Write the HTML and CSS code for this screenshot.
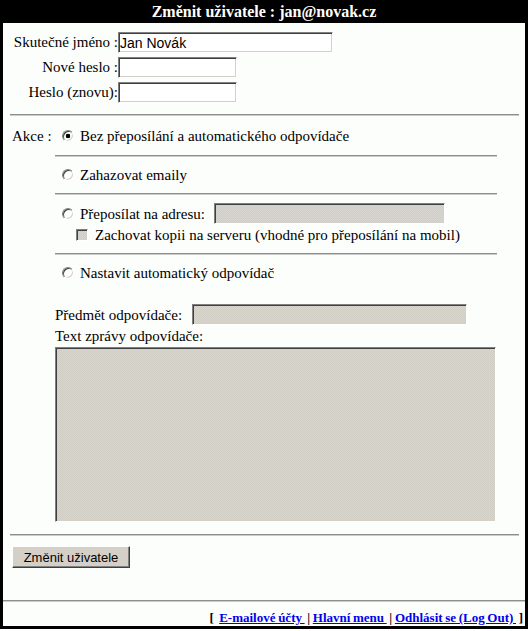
FILE: index.html
```html
<!DOCTYPE html>
<html lang="cs">
<head>
<meta charset="utf-8">
<title>Změnit uživatele</title>
<link rel="stylesheet" href="styles.css">
</head>
<body>
<div class="frame">
  <h1 class="title">Změnit uživatele : jan@novak.cz</h1>
  <form class="form">
    <div class="user">
      <label class="lbl">Skutečné jméno :</label><input class="tf name" type="text" value="Jan Novák">
      <label class="lbl">Nové heslo :</label><input class="tf pw" type="password">
      <label class="lbl">Heslo (znovu):</label><input class="tf pw" type="password">
    </div>
    <hr class="rule wide">
    <div class="actions">
      <div class="akce">Akce :</div>
      <div class="opts">
        <label class="opt r1"><input class="rb" type="radio" name="akce" checked>Bez přeposílání a automatického odpovídače</label>
        <hr class="rule sub h1">
        <label class="opt r2"><input class="rb" type="radio" name="akce">Zahazovat emaily</label>
        <hr class="rule sub h2">
        <div class="opt r3"><input class="rb" type="radio" name="akce">Přeposílat na adresu:<input class="tf off fwd" type="text" disabled></div>
        <label class="opt r3b"><input class="cb" type="checkbox" disabled>Zachovat kopii na serveru (vhodné pro přeposílání na mobil)</label>
        <hr class="rule sub h3">
        <label class="opt r4"><input class="rb" type="radio" name="akce">Nastavit automatický odpovídač</label>
        <div class="opt subj">Předmět odpovídače:<input class="tf off subjin" type="text" disabled></div>
        <div class="opt txtl">Text zprávy odpovídače:</div>
        <textarea class="ta off" disabled></textarea>
      </div>
    </div>
    <hr class="rule wide lower">
    <div class="submit"><button class="btn" type="button">Změnit uživatele</button></div>
    <hr class="rule full">
    <div class="footer">[&nbsp; <a href="#">E-mailové účty&nbsp;</a> | <a href="#">Hlavní menu&nbsp;</a> | <a href="#">Odhlásit se (Log Out)&nbsp;</a> ]</div>
  </form>
</div>
</body>
</html>
```

FILE: styles.css
```css
html, body {
  margin: 0;
  padding: 0;
  background: #ffffff;
}
body {
  font-family: "Liberation Serif", "Times New Roman", serif;
  font-size: 15px;
  color: #000;
}
.frame {
  width: 528px;
  box-sizing: border-box;
  border: 3px solid #000;
  border-top: 0;
  background: #fcfefc;
}
.title {
  margin: 0;
  height: 23px;
  line-height: 23px;
  background: #000;
  color: #fff;
  font-size: 16px;
  font-weight: bold;
  text-align: center;
}
.form {
  margin: 0;
}
.user {
  padding-top: 9px;
  display: grid;
  grid-template-columns: 115px auto;
  row-gap: 4px;
  align-items: center;
}
.lbl {
  text-align: right;
  line-height: 21px;
  white-space: nowrap;
}
.tf {
  box-sizing: border-box;
  height: 21px;
  margin: 0;
  padding: 0 0 0 1px;
  font-family: "Liberation Sans", Arial, sans-serif;
  font-size: 14px;
  color: #000;
  background: #fff;
  border: 1px solid;
  border-color: #808080 #ffffff #ffffff #808080;
  box-shadow: inset 1px 1px 0 #404040, inset -1px -1px 0 #d4d0c8;
  outline: none;
  justify-self: start;
}
.name { width: 215px; }
.pw { width: 119px; }
.off, .cb {
  background-color: #d4d0c8;
  background-image: repeating-conic-gradient(#d9d7d1 0 25%, #cfccc4 0 50%);
  background-size: 2px 2px;
}
.rule {
  height: 0;
  border: 0;
  border-top: 1px solid #8e8e8e;
  border-bottom: 1px solid #cbcbcb;
  padding: 0;
}
.rule.wide {
  margin: 11px 6px 0 7px;
}
.rule.wide.lower {
  margin-top: 12px;
}
.rule.full {
  margin: 32px 0 0 0;
}
.rule.sub {
  margin: 9px 0 0 0;
}
.rule.h2, .rule.h3 { margin-top: 8px; }
.actions {
  display: flex;
}
.akce {
  width: 52px;
  box-sizing: border-box;
  padding-left: 9px;
  margin-top: 10px;
  line-height: 20px;
  white-space: nowrap;
}
.opts {
  width: 442px;
  display: flex;
  flex-direction: column;
}
.opt {
  display: flex;
  align-items: center;
  height: 20px;
  line-height: 20px;
  white-space: nowrap;
}
.r1 { margin-top: 10px; }
.r2 { margin-top: 8px; }
.r3 { margin-top: 8px; height: 21px; }
.r3b { margin-top: 1px; }
.r4 { margin-top: 8px; }
.subj { margin-top: 21px; height: 21px; }
.txtl { margin-top: 1px; }
.rb {
  -webkit-appearance: none;
  appearance: none;
  box-sizing: border-box;
  width: 12px;
  height: 12px;
  margin: 0 6px 0 7px;
  border-radius: 50%;
  border: 1px solid;
  border-color: #808080 #ffffff #ffffff #808080;
  box-shadow: inset 1px 1px 0 #404040, inset -1px -1px 0 #d4d0c8;
  background: #fff;
  flex: none;
}
.rb:checked {
  background: radial-gradient(circle, #000 0 2px, #fff 2.6px);
}
.cb {
  -webkit-appearance: none;
  appearance: none;
  box-sizing: border-box;
  width: 12px;
  height: 12px;
  margin: 0 7px 0 21px;
  border: 1px solid;
  border-color: #808080 #ffffff #ffffff #808080;
  box-shadow: inset 1px 1px 0 #404040, inset -1px -1px 0 #d4d0c8;
  flex: none;
}
.fwd {
  width: 231px;
  margin-left: 9px;
}
.subjin {
  width: 275px;
  margin-left: 10px;
}
.ta {
  display: block;
  box-sizing: border-box;
  width: 441px;
  height: 175px;
  margin: 1px 0 0 0;
  padding: 0;
  resize: none;
  border: 1px solid;
  border-color: #808080 #ffffff #ffffff #808080;
  box-shadow: inset 1px 1px 0 #404040, inset -1px -1px 0 #d4d0c8;
}
.submit {
  margin-top: 10px;
  padding-left: 9px;
  display: flex;
}
.btn {
  box-sizing: border-box;
  width: 118px;
  height: 22px;
  margin: 0;
  padding: 0;
  font-family: "Liberation Sans", Arial, sans-serif;
  font-size: 13px;
  color: #000;
  background: #d4d0c8;
  border: 1px solid;
  border-color: #ffffff #404040 #404040 #ffffff;
  box-shadow: inset -1px -1px 0 #808080;
}
.footer {
  margin-top: 7px;
  height: 17px;
  line-height: 17px;
  padding-right: 2px;
  text-align: right;
  font-size: 13px;
  font-weight: bold;
  white-space: nowrap;
  word-spacing: -0.6px;
}
.footer a {
  color: #0000ee;
  text-decoration: underline;
}
```
